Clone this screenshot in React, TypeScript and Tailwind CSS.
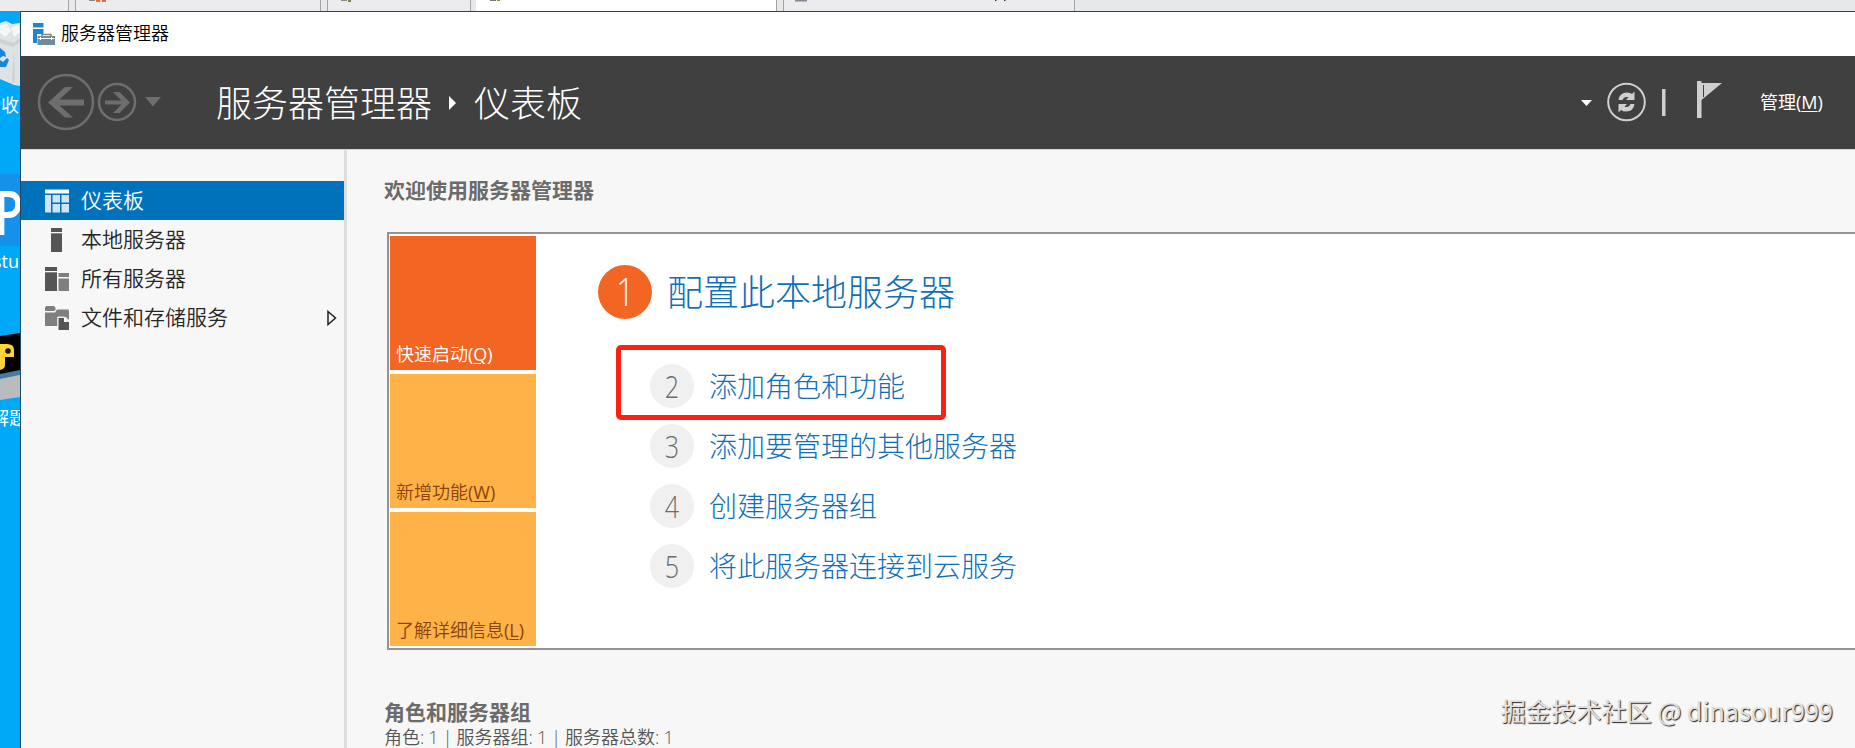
import React from 'react';

type NavItem = {
  label: string;
  icon: React.FC;
  active?: boolean;
  expandable?: boolean;
};

const DashboardIcon: React.FC = () => (
  <svg className="w-6 h-6" viewBox="0 0 24 24">
    <rect width="24" height="4" y="0.5" fill="#fff" />
    <g fill="#cfe5f5">
      <rect y="6" width="6" height="17.5" />
      <rect x="7.5" y="6" width="7.5" height="7.5" />
      <rect x="16.5" y="6" width="7.5" height="7.5" />
      <rect x="7.5" y="15" width="7.5" height="8.5" />
      <rect x="16.5" y="15" width="7.5" height="8.5" />
    </g>
  </svg>
);

const LocalServerIcon: React.FC = () => (
  <svg className="w-6 h-6" viewBox="0 0 24 24" fill="#555">
    <rect x="6" width="11" height="4" />
    <rect x="6" y="5.3" width="11" height="18.7" />
  </svg>
);

const AllServersIcon: React.FC = () => (
  <svg className="w-6 h-6" viewBox="0 0 24 24">
    <g fill="#555">
      <rect width="12" height="4" />
      <rect y="5.3" width="12" height="18.7" />
    </g>
    <g fill="#7f7f7f">
      <rect x="13.5" y="6" width="10.5" height="4" />
      <rect x="13.5" y="11.5" width="10.5" height="12.5" />
    </g>
  </svg>
);

const StorageIcon: React.FC = () => (
  <svg className="w-6 h-6" viewBox="0 0 24 24">
    <path fill="#7f7f7f" d="M0 1.5 1.2 0H9l1.500 1.500V4L9 5H0zM0 6.500h10L12 3.500h11.500L24 5v9l-3-3h-8.500V20H0z" />
    <path fill="#555" d="M13.500 12h5.500v4H24v8H13.500z" />
    <path fill="none" stroke="#e4e4e4" d="M12.700 20v-9H19q3 .5 3 4h2" />
  </svg>
);

const navItems: NavItem[] = [
  { label: '仪表板', icon: DashboardIcon, active: true },
  { label: '本地服务器', icon: LocalServerIcon },
  { label: '所有服务器', icon: AllServersIcon },
  { label: '文件和存储服务', icon: StorageIcon, expandable: true },
];

const tiles = [
  { label: '快速启动', hotkey: 'Q', className: 'bg-[#f26522] text-white' },
  { label: '新增功能', hotkey: 'W', className: 'bg-[#ffb247] text-[#8a420c]' },
  { label: '了解详细信息', hotkey: 'L', className: 'bg-[#ffb247] text-[#8a420c]' },
];

const steps = ['添加角色和功能', '添加要管理的其他服务器', '创建服务器组', '将此服务器连接到云服务'];

const TabStrip: React.FC = () => (
  <div className="flex h-[11px] shrink-0 overflow-hidden bg-[#e6e8ea]">
    <div className="w-[69px] border-r border-[#a0a4a8] bg-[#ececee]" />
    <div className="ml-[6px] w-[246px] border-x border-[#a0a4a8] bg-[#ececee]">
      <svg className="ml-[13px] h-[2px] w-[18px]" viewBox="0 0 18 2">
        <path fill="#888" d="M0 0h6v1H0z" />
        <path fill="#ee6b35" d="M7 0h4v2H7zM13 0h4v2h-4z" />
      </svg>
    </div>
    <div className="ml-[6px] w-[144px] border-x border-[#a0a4a8] bg-[#ececee]">
      <svg className="ml-[13px] h-[2px] w-3" viewBox="0 0 12 2">
        <path fill="#888" d="M0 0h6v1H0z" />
        <path fill="#71884e" d="M7 0h3v2H7z" />
      </svg>
    </div>
    <div className="ml-[5px] w-[301px] border-r border-[#a0a4a8] bg-white">
      <svg className="ml-[14px] h-[2px] w-3" viewBox="0 0 12 2">
        <path fill="#777" d="M0 0h6v1H0z" />
        <path fill="#71983a" d="M7 0h3v1H7z" />
      </svg>
    </div>
    <div className="ml-[6px] w-[292px] border-x border-[#a0a4a8] bg-[#ececee]">
      <svg className="h-[2px] w-[290px]" viewBox="0 0 290 2">
        <path fill="#808890" d="M11 0h12v1.500H11z" />
        <path fill="#333" d="M211 0h1.500v1H211zM220 0h1.500v1H220z" />
      </svg>
    </div>
  </div>
);

// Slice of the desktop that stays visible left of the window
const Desktop: React.FC = () => (
  <div className="relative w-[20px] shrink-0 overflow-hidden bg-[#00a8f8] text-white">
    <svg className="absolute left-0 top-0 h-[80px] w-[20px]" viewBox="0 0 20 80">
      <path fill="#dfe2e4" d="M0 12 6 10l6 3 8-1v63l-6-1L0 68z" />
      <path fill="#f6f7f7" d="M0 14 7 13l4 7-6 6-5-4zM11 17l7-4 2 8-6 5z" />
      <path fill="#cdd1d4" d="M0 28 14 32l6-5v4l-7 5-13-4zM14 38l1 34-3-1z" />
      <path fill="#1687d9" d="m0 37 5 4 1 5-3-1-3 2zM0 49l3 2 4-4 2 2-3 7H0z" />
    </svg>
    <span className="absolute left-[1px] top-[84px] text-[18px] leading-[20px]">收</span>
    <div className="absolute left-0 top-[163px] h-[72px] w-[20px] bg-[#1591ea]" />
    <span className="absolute right-[-3px] top-[168px] origin-right scale-x-[0.75] text-[62px] font-semibold leading-[64px]">
      P
    </span>
    <span className="absolute right-[1px] top-[238px] text-[18px] leading-[24px]">.stu</span>
    <svg className="absolute left-0 top-[320px] h-[70px] w-[20px]" viewBox="0 0 20 70">
      <path fill="#000" d="M0 5 20 2v39L0 44z" />
      <path fill="#ffd43b" d="M0 13h7q7 0 7 6v7H5v8q0 4-5 5z" />
      <circle cx="8" cy="20" r="2.8" fill="#181818" />
      <path fill="#4d789d" d="m0 43 20-4v5L0 48z" />
      <path fill="#b9bbbe" d="m0 48 20-4v22L0 69z" />
    </svg>
    <span className="absolute left-[-9px] top-[396px] whitespace-nowrap text-[18px] leading-[22px]">解题</span>
  </div>
);

const Header: React.FC = () => (
  <header className="flex h-[93px] shrink-0 items-center bg-[#404040] text-white">
    <svg className="mb-px ml-[15px] h-[60px] w-[126px]" viewBox="0 0 126 60" fill="none" stroke="#6e6e6e">
      <circle cx="30" cy="30" r="27" strokeWidth="2.5" />
      <path stroke="none" fill="#6e6e6e" d="M12 30.500 29 15h8L23.500 27.500H48v6H23.500L37 45.500h-8z" />
      <circle cx="81" cy="30" r="18" strokeWidth="2.5" />
      <path stroke="none" fill="#6e6e6e" d="M94 30.500 83.500 41H77l8.500-8.500H69v-4h16.500L77 20h6.500z" />
      <path stroke="none" fill="#6e6e6e" d="M109 25h16l-8 9.500z" />
    </svg>
    <div className="ml-[54px] flex items-center pt-[2px] text-[36px] font-light leading-[48px]">
      <span>服务器管理器</span>
      <svg className="ml-[17px] mb-[2px] h-4 w-[8px]" viewBox="0 0 8 16" fill="#fff">
        <path d="m0 1 7 7-7 7z" />
      </svg>
      <span className="ml-[17px]">仪表板</span>
    </div>
    <div className="ml-auto mr-[29px] flex items-center">
      <svg className="mb-[2px] h-[42px] w-[144px]" viewBox="0 0 144 42">
        <path fill="#fff" d="M2 19h11l-5.500 6z" />
        <circle cx="47.500" cy="21" r="18.300" fill="none" stroke="#cfcfcf" strokeWidth="2" />
        <g fill="#cfcfcf">
          <path d="M39.500 19q1-7.500 8.500-7.500 3 0 5 1.500l2.500-2.500V19h-8.500l2.500-2.800q-4.500-1-6 2.800z" />
          <path d="M55.500 23q-1 7.500-8.500 7.500-3 0-5-1.500l-2.500 2.500V23H48l-2.500 2.800q4.500 1 6-2.800z" />
          <rect x="83" y="8" width="3.500" height="27" />
          <path d="M118 0h4.500v2H143L122.500 19v18H118z" />
        </g>
        <path stroke="#404040" d="M124.500 4v12" />
      </svg>
      <span className="ml-[37px] pb-[2px] text-[18px] leading-6">
        管理<span className="inline-block w-[30px] whitespace-nowrap">(<span className="underline underline-offset-2">M</span>)</span>
      </span>
    </div>
  </header>
);

const Sidebar: React.FC = () => (
  <nav className="w-[326px] shrink-0 border-r-[3px] border-[#dedede] pt-[31px]">
    {navItems.map((item) => (
      <div
        key={item.label}
        className={
          item.active
            ? 'flex h-[39px] items-center bg-[#0072bc] pl-6 text-white'
            : 'flex h-[39px] items-center pl-6 text-[#262626]'
        }
      >
        <item.icon />
        <span className="ml-3 pb-[2px] text-[21px] font-[350] leading-[30px]">{item.label}</span>
        {item.expandable && (
          <svg className="ml-auto mr-[7px] h-4 w-[10px]" viewBox="0 0 10 16">
            <path fill="none" stroke="#222" strokeWidth="1.500" d="m1 1.500 7.500 6.500L1 14.500z" />
          </svg>
        )}
      </div>
    ))}
  </nav>
);

const WelcomePanel: React.FC = () => (
  <section className="ml-[40px] mt-[27px] flex h-[418px] border-2 border-r-0 border-[#939395] bg-white p-[2px] pl-[1px]">
    <div className="flex w-[146px] shrink-0 flex-col gap-1">
      {tiles.map((tile) => (
        <div key={tile.hotkey} className={`flex h-[134px] items-end pb-1 pl-[6px] text-[18px] font-[350] leading-6 ${tile.className}`}>
          <span>
            {tile.label}
            <span className="font-normal">
              (<span className="underline underline-offset-2">{tile.hotkey}</span>)
            </span>
          </span>
        </div>
      ))}
    </div>
    <div className="relative ml-[62px] pt-[28px]">
      <div className="flex items-center text-[36px] font-light leading-[54px]">
        <span className="flex h-[54px] w-[54px] items-center justify-center rounded-full bg-[#f26522] text-white">
          <span className="scale-x-90 scale-y-105">1</span>
        </span>
        <span className="ml-[15px] pt-[2px] text-[#0f6fb8]">配置此本地服务器</span>
      </div>
      <div className="ml-[52px] mt-[44px] flex flex-col gap-4">
        {steps.map((step, index) => (
          <div key={step} className="flex h-11 items-center text-[28px] font-light leading-[44px]">
            <span className="flex h-11 w-11 items-center justify-center rounded-full bg-[#f0f0f0] text-[#6c6c6c]">
              <span className="scale-x-90 scale-y-110">{index + 2}</span>
            </span>
            <span className="ml-[15px] text-[#0f6fb8]">{step}</span>
          </div>
        ))}
      </div>
      {/* Highlight around the first follow-up step */}
      <div className="absolute left-[18px] top-[109px] h-[75px] w-[330px] rounded-[5px] border-[5px] border-[#fe1f14]" />
    </div>
  </section>
);

const App: React.FC = () => {
  return (
    <div className="flex h-[748px] w-[1855px] flex-col overflow-hidden font-['Open_Sans','Noto_Sans_CJK_SC',sans-serif]">
      <TabStrip />
      <div className="flex min-h-0 flex-1">
        <Desktop />
        <div className="flex min-w-0 flex-1 flex-col border-l border-t border-[#1a4a63] bg-[#f7f7f7]">
          <div className="flex h-11 shrink-0 items-center bg-white text-black">
            <svg className="mb-px ml-3 h-[22px] w-[22px]" viewBox="0 0 22 22">
              <path fill="#1b86d1" d="M0 0h10.500v4.500H0zM0 6h10.500v5H4v9H0z" />
              <path fill="#718b98" d="M4.500 13h17.500v9H4.500z" />
              <path fill="none" stroke="#718b98" strokeWidth="1.500" d="M9 13v-1.500h9V13" />
              <path fill="none" stroke="#fff" d="M5 15.500h16.500M7.500 14v3M18.500 14v3" />
            </svg>
            <span className="ml-[6px] pb-[2px] text-[18px] font-[350] leading-6">服务器管理器</span>
          </div>
          <Header />
          <div className="flex min-h-0 flex-1 border-t border-[#d5d5d5]">
            <Sidebar />
            <main className="relative min-w-0 flex-1 overflow-hidden pt-[25px]">
              <h2 className="ml-[37px] text-[21px] font-bold leading-[30px] text-[#6b6b6b]">欢迎使用服务器管理器</h2>
              <WelcomePanel />
              <h2 className="ml-[37px] mt-[47px] text-[21px] font-bold leading-[30px] text-[#6b6b6b]">角色和服务器组</h2>
              <p className="ml-[37px] -mt-[2px] text-[18px] font-[350] leading-6 text-[#555] [word-spacing:-0.6px]">
                角色: 1 | 服务器组: 1 | 服务器总数: 1
              </p>
              <div className="absolute bottom-[21px] right-[22px] font-['Noto_Sans_CJK_SC',sans-serif] text-[25.2px] leading-[34px] text-[#e0e0e0] [text-shadow:1px_1px_1px_#222]">
                掘金技术社区 @ dinasour999
              </div>
            </main>
          </div>
        </div>
      </div>
    </div>
  );
};

export default App;
